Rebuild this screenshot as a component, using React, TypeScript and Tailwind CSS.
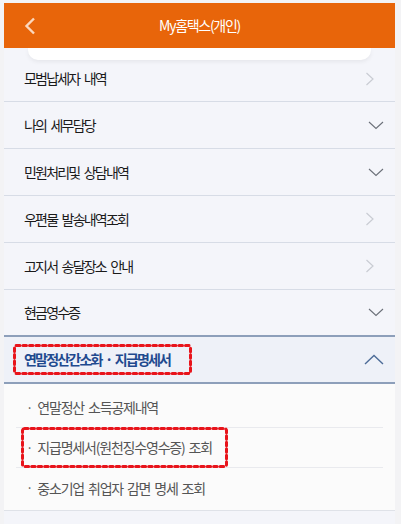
import React from "react";

const font = { fontFamily: '"Noto Sans CJK KR", "Noto Sans", sans-serif' };

type Row = { label: string; kind: "right" | "down" };

const rows: Row[] = [
  { label: "나의 세무담당", kind: "down" },
  { label: "민원처리및 상담내역", kind: "down" },
  { label: "우편물 발송내역조회", kind: "right" },
  { label: "고지서 송달장소 안내", kind: "right" },
];

const subItems = ["연말정산 소득공제내역", "지급명세서(원천징수영수증) 조회", "중소기업 취업자 감면 명세 조회"];

function ChevronRight() {
  return (
    <svg width="10" height="14" viewBox="0 0 10 14" className="mr-[20px]">
      <path d="M1.5 1 L8 7 L1.5 13" fill="none" stroke="#c9ccd3" strokeWidth="1.2" />
    </svg>
  );
}

function ChevronDown() {
  return (
    <svg width="16" height="9" viewBox="0 0 16 9" className="mr-[11px]">
      <path d="M1 1 L8 7.5 L15 1" fill="none" stroke="#6b7079" strokeWidth="1.1" />
    </svg>
  );
}

function ChevronUp() {
  return (
    <svg width="20" height="11" viewBox="0 0 20 11" className="mr-[11px]">
      <path d="M1 10 L10 1.5 L19 10" fill="none" stroke="#4d6c98" strokeWidth="1.4" />
    </svg>
  );
}

function DashedBox({ w, h }: { w: number; h: number }) {
  return (
    <svg width={w} height={h} className="pointer-events-none absolute left-0 top-0">
      <rect
        x="1.5"
        y="1.5"
        width={w - 3}
        height={h - 3}
        rx="2"
        fill="none"
        stroke="#e8141b"
        strokeWidth="3"
        strokeDasharray="3.5 3"
        strokeLinecap="round"
      />
    </svg>
  );
}

function ListRow({ label, kind }: Row) {
  return (
    <div className="flex h-[47px] items-center justify-between border-b border-[#d7dce6] pl-[20px]">
      <span className="text-[14px] tracking-[-1.8px] text-[#1a1a1a] [word-spacing:3px]">{label}</span>
      {kind === "right" ? <ChevronRight /> : <ChevronDown />}
    </div>
  );
}

export default function App() {
  return (
    <div className="h-[524px] w-[401px] overflow-hidden bg-[#f3f3f5] pl-[4px] pr-[6px] pt-[3px]" style={font}>
      <div className="h-full bg-[#f4f5fa]">
        {/* top bar */}
        <header className="relative flex h-[45px] items-center justify-center bg-[#e8650a]">
          <svg width="12" height="18" viewBox="0 0 12 18" className="absolute left-[20px] top-[14px]">
            <path d="M10 1.5 L2.5 9 L10 16.5" fill="none" stroke="#fbd7bd" strokeWidth="2.4" />
          </svg>
          <h1 className="text-[14px] tracking-[-1.3px] text-white">My홈택스(개인)</h1>
        </header>

        <div className="mx-[24px] h-[12px] rounded-b-[10px] bg-white shadow-[0_2px_4px_rgba(0,0,0,0.06)]" />

        <div className="flex h-[42px] items-center justify-between border-b border-[#d7dce6] pb-[4px] pl-[20px]">
          <span className="text-[14px] tracking-[-1.8px] text-[#1a1a1a] [word-spacing:3px]">모범납세자 내역</span>
          <ChevronRight />
        </div>

        {rows.map((r) => (
          <ListRow key={r.label} label={r.label} kind={r.kind} />
        ))}
        <div className="flex h-[47px] items-center justify-between border-b-2 border-[#8d9fba] pl-[20px]">
          <span className="text-[14px] tracking-[-1.8px] text-[#1a1a1a]">현금영수증</span>
          <ChevronDown />
        </div>

        {/* expanded group */}
        <div className="flex h-[47px] items-center justify-between border-b-2 border-[#8d9fba] bg-[#eef1f8] pl-[9px]">
          <div className="relative flex h-[31px] w-[179px] items-center pl-[11px]">
            <span className="whitespace-nowrap text-[14px] font-bold tracking-[-1.8px] text-[#1f4a8f] [word-spacing:2px]">
              연말정산간소화 · 지급명세서
            </span>
            <DashedBox w={179} h={31} />
          </div>
          <ChevronUp />
        </div>

        <div className="border-b border-[#dfe2e8] bg-[#fbfbfb] px-[12px] pt-[4px] pb-[2px]">
          {subItems.map((s, i) => (
            <div
              key={s}
              className={`flex h-[40px] items-center ${i < subItems.length - 1 ? "border-b border-[#e9eaee]" : ""}`}
            >
              {i === 1 ? (
                <div className="relative ml-[5px] flex h-[41px] w-[207px] items-center pl-[5px]">
                  <span className="mr-[4px] text-[13px] text-[#555]">·</span>
                  <span className="whitespace-nowrap text-[14px] tracking-[-1.2px] text-[#555] [word-spacing:2px]">{s}</span>
                  <DashedBox w={207} h={41} />
                </div>
              ) : (
                <div className="ml-[10px] flex items-center">
                  <span className="mr-[4px] text-[13px] text-[#555]">·</span>
                  <span className="whitespace-nowrap text-[14px] tracking-[-1.2px] text-[#555] [word-spacing:2px]">{s}</span>
                </div>
              )}
            </div>
          ))}
        </div>
      </div>
    </div>
  );
}
